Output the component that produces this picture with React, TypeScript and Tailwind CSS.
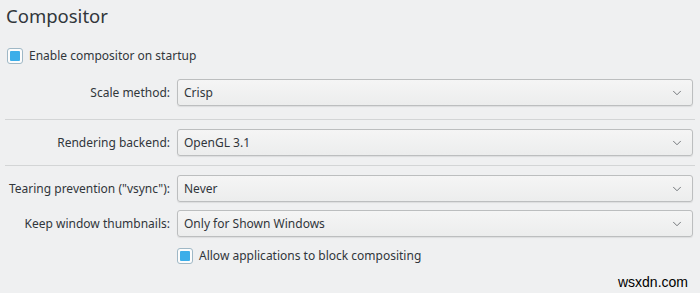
import { ChevronDown } from "lucide-react";

const Check = () => (
  <span className="w-[16px] h-[16px] rounded-[3px] border border-[#9fb8c6] bg-[#fcfcfc] flex items-center justify-center shrink-0">
    <span className="w-[10px] h-[10px] rounded-[1px] bg-[#3daee9]" />
  </span>
);

const Combo = ({ value }: { value: string }) => (
  <div className="flex-1 h-[27px] mr-[7px] rounded-[3px] border border-[#bcbebf] bg-gradient-to-b from-[#f5f5f5] to-[#eceded] shadow-[0_1px_1px_rgba(0,0,0,0.08)] flex items-center justify-between pl-[6px] pr-[8px]">
    <span>{value}</span>
    <ChevronDown size={14} strokeWidth={1.3} className="text-[#4d5257]" />
  </div>
);

const Row = ({ label, value }: { label: string; value: string }) => (
  <div className="flex items-center">
    <div className="w-[170px] text-right mr-[7px] whitespace-nowrap">{label}</div>
    <Combo value={value} />
  </div>
);

export default function App() {
  return (
    <div
      className="relative w-[700px] h-[293px] overflow-hidden bg-[#eff0f1] text-[#31363b] text-[12px]"
      style={{ fontFamily: '"Noto Sans", sans-serif' }}
    >
      <h1 className="text-[18.5px] leading-[26px] ml-[6px] mt-[3px]">Compositor</h1>

      <label className="flex items-center gap-[6px] ml-[7px] mt-[18px]">
        <Check />
        <span>Enable compositor on startup</span>
      </label>

      <div className="mt-[14px]">
        <Row label="Scale method:" value="Crisp" />
        <div className="h-px bg-[#d3d5d6] mx-[5px] mt-[13px] mb-[9px]" />
        <Row label="Rendering backend:" value="OpenGL 3.1" />
        <div className="h-px bg-[#d3d5d6] mx-[5px] my-[9px]" />
        <div className="flex flex-col gap-[8px]">
          <Row label='Tearing prevention ("vsync"):' value="Never" />
          <Row label="Keep window thumbnails:" value="Only for Shown Windows" />
        </div>
        <label className="flex items-center gap-[6px] ml-[177px] mt-[10px]">
          <Check />
          <span>Allow applications to block compositing</span>
        </label>
      </div>

      <div
        className="absolute right-[12px] bottom-[3px] text-[14px] leading-[16px] text-black"
        style={{ fontFamily: '"Liberation Sans", sans-serif' }}
      >
        wsxdn.com
      </div>
    </div>
  );
}
